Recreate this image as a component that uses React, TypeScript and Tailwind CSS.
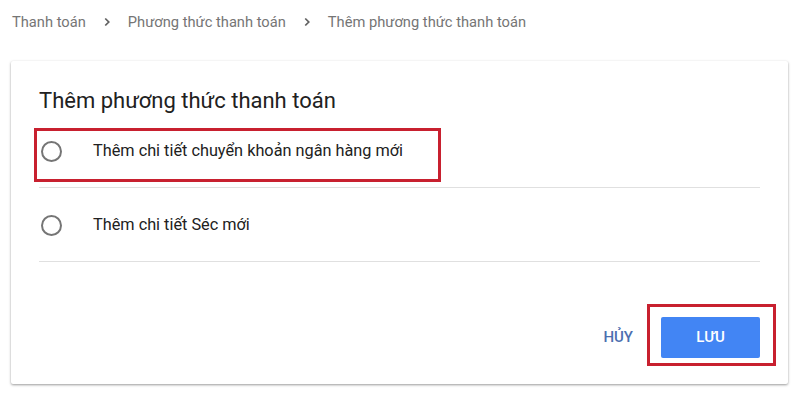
import { useState } from 'react';

const options = [
    { id: 'bank', label: 'Thêm chi tiết chuyển khoản ngân hàng mới' },
    { id: 'cheque', label: 'Thêm chi tiết Séc mới' },
];

const crumbs = ['Thanh toán', 'Phương thức thanh toán', 'Thêm phương thức thanh toán'];

export default function App() {
    const [selected, setSelected] = useState<string | null>(null);

    return (
        <div className="min-h-[401px] w-[800px] bg-white font-['Roboto',sans-serif]">
            <nav className="flex h-[45px] items-center pl-[12px] text-[14.7px] text-[#757575]">
                {crumbs.map((crumb, i) => (
                    <span key={crumb} className="flex items-center">
                        {i > 0 ? (
                            <svg
                                viewBox="0 0 24 24"
                                className="mx-[14px] h-[14px] w-[14px] text-[#616161]"
                            >
                                <path
                                    d="M9 6l6 6-6 6"
                                    fill="none"
                                    stroke="currentColor"
                                    strokeWidth="3"
                                />
                            </svg>
                        ) : null}
                        {crumb}
                    </span>
                ))}
            </nav>

            <section className="mt-[16px] ml-[11px] w-[777px] rounded-[2px] bg-white px-[28px] pb-[26px] shadow-[0_1px_3px_rgba(0,0,0,0.28),0_1px_2px_rgba(0,0,0,0.14)]">
                <h1 className="pt-[25px] text-[22px] leading-[30px] text-[#212121]">
                    Thêm phương thức thanh toán
                </h1>

                <ul>
                    {options.map((option, i) => (
                        <li
                            key={option.id}
                            className={`relative flex cursor-pointer items-center border-b border-[#e0e0e0] ${i === 0 ? 'h-[72px]' : 'h-[74px] pt-[2px]'}`}
                            onClick={() => setSelected(option.id)}
                        >
                            <span className="ml-[2px] flex h-[21px] w-[21px] items-center justify-center rounded-full border-[2px] border-[#757575]">
                                {selected === option.id ? (
                                    <span className="h-[11px] w-[11px] rounded-full bg-[#4285f4]" />
                                ) : null}
                            </span>
                            <span className="ml-[31px] text-[16.3px] text-[#212121]">
                                {option.label}
                            </span>
                            {i === 0 ? (
                                <span className="pointer-events-none absolute top-[12px] left-[-5px] h-[54px] w-[407px] border-[3px] border-[#c8202f]" />
                            ) : null}
                        </li>
                    ))}
                </ul>

                <div className="mt-[55px] flex items-center justify-end">
                    <button className="mr-[28px] text-[15px] font-medium text-[#4c6fb0] uppercase">
                        Hủy
                    </button>
                    <div className="relative">
                        <button className="h-[41px] w-[99px] rounded-[2px] bg-[#4285f4] text-[15px] font-medium text-white uppercase">
                            Lưu
                        </button>
                        <span className="pointer-events-none absolute top-[-13px] right-[-16px] bottom-[-8px] left-[-14px] border-[3px] border-[#c8202f]" />
                    </div>
                </div>
            </section>
        </div>
    );
}
